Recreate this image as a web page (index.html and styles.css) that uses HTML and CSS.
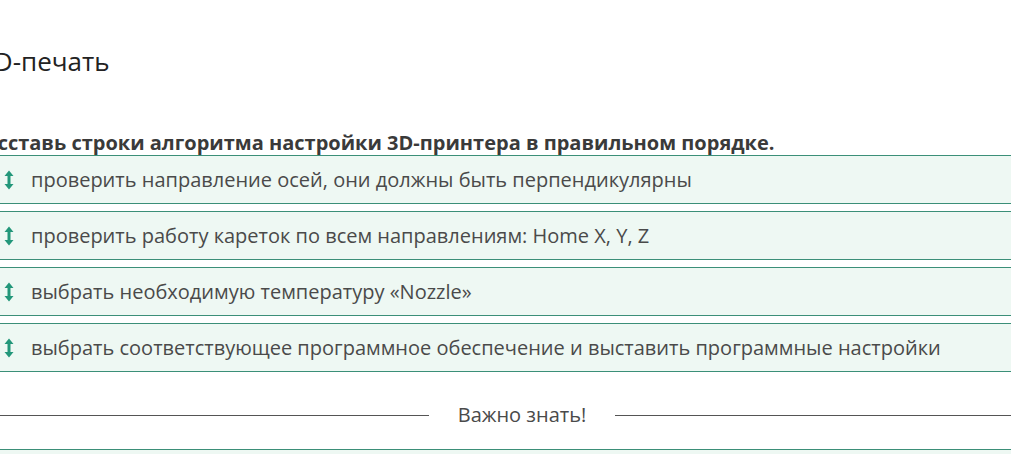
FILE: index.html
```html
<!DOCTYPE html>
<html lang="ru">
  <head>
    <meta charset="UTF-8" />
    <meta name="viewport" content="width=device-width, initial-scale=1.0" />
    <title>3D-печать</title>
    <link rel="stylesheet" href="styles.css">
  </head>
  <body>
    <main class="page">
      <h1 class="title">3D-печать</h1>
      <p class="task">Расставь строки алгоритма настройки 3D-принтера в правильном порядке.</p>
      <ul class="sortable">
        <li class="row">
          <svg class="handle" viewBox="0 0 10 20" width="10" height="20">
            <path d="M5 0.5 L0.5 6 H9.5 Z M5 19.5 L0.5 14 H9.5 Z" fill="#23977a" />
            <rect x="3.5" y="4" width="3" height="12" fill="#23977a" />
          </svg>
          <span>проверить направление осей, они должны быть перпендикулярны</span>
        </li>
        <li class="row">
          <svg class="handle" viewBox="0 0 10 20" width="10" height="20">
            <path d="M5 0.5 L0.5 6 H9.5 Z M5 19.5 L0.5 14 H9.5 Z" fill="#23977a" />
            <rect x="3.5" y="4" width="3" height="12" fill="#23977a" />
          </svg>
          <span>проверить работу кареток по всем направлениям: Home X, Y, Z</span>
        </li>
        <li class="row">
          <svg class="handle" viewBox="0 0 10 20" width="10" height="20">
            <path d="M5 0.5 L0.5 6 H9.5 Z M5 19.5 L0.5 14 H9.5 Z" fill="#23977a" />
            <rect x="3.5" y="4" width="3" height="12" fill="#23977a" />
          </svg>
          <span>выбрать необходимую температуру «Nozzle»</span>
        </li>
        <li class="row">
          <svg class="handle" viewBox="0 0 10 20" width="10" height="20">
            <path d="M5 0.5 L0.5 6 H9.5 Z M5 19.5 L0.5 14 H9.5 Z" fill="#23977a" />
            <rect x="3.5" y="4" width="3" height="12" fill="#23977a" />
          </svg>
          <span>выбрать соответствующее программное обеспечение и выставить программные настройки</span>
        </li>
      </ul>
      <div class="divider">
        <span class="line"></span>
        <span class="divider-text">Важно знать!</span>
        <span class="line"></span>
      </div>
      <div class="note"></div>
    </main>
  </body>
</html>
```

FILE: styles.css
```css
html {
  font-family: "Open Sans", "Noto Sans", sans-serif;
}

body {
  margin: 0;
  overflow: hidden;
  background: #fff;
}

.page {
  margin-left: -22px;
  width: 1088px;
  padding-top: 41px;
}

.title {
  font-size: 26px;
  font-weight: 400;
  color: #222;
  margin: 0 0 0 1px;
  line-height: 40px;
}

.task {
  font-size: 20px;
  font-weight: 700;
  color: #3a3a3a;
  margin: 50px 0 0 -5px;
  line-height: 24px;
}

.sortable {
  list-style: none;
  margin: 0;
  padding: 0;
  display: flex;
  flex-direction: column;
  gap: 7px;
}

.row {
  display: flex;
  align-items: center;
  gap: 17px;
  height: 47px;
  padding-left: 26px;
  background: #eef8f3;
  border-top: 1px solid #3b8f78;
  border-bottom: 1px solid #3b8f78;
  font-size: 20px;
  color: #4a4a4a;
}

.handle {
  flex: none;
}

.divider {
  display: flex;
  align-items: center;
  margin-top: 30px;
}

.line {
  flex: 1;
  height: 1px;
  background: #555;
}

.divider-text {
  font-size: 20px;
  color: #4a4a4a;
  margin: 0 29px;
  line-height: 26px;
}

.note {
  margin-top: 21px;
  height: 20px;
  border-top: 1px solid #3b8f78;
  background: #eef8f3;
}
```
